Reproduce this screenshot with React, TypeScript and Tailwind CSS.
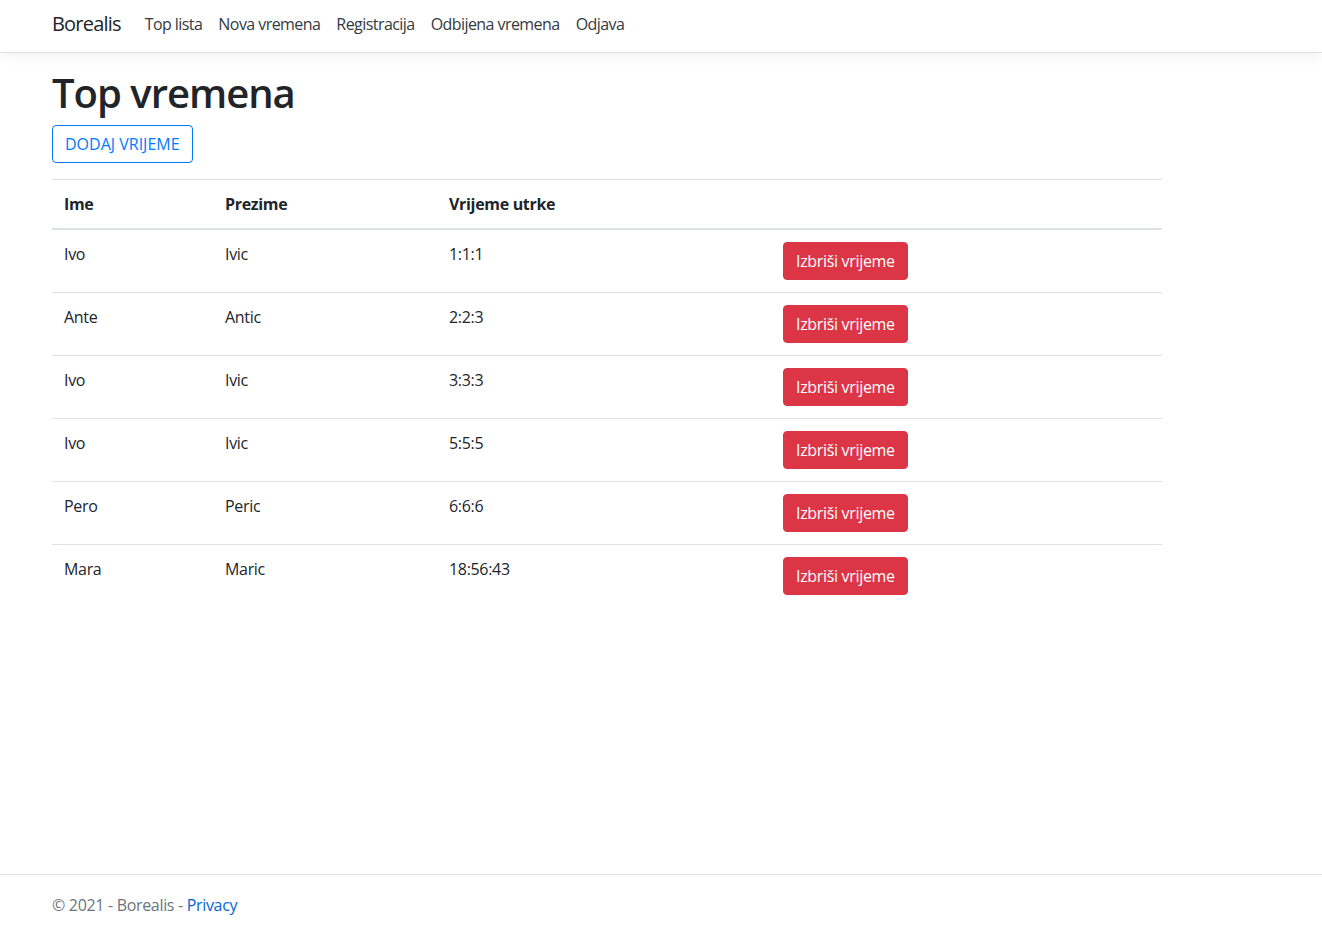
import React from "react";

type Row = { ime: string; prezime: string; vrijeme: string };

const rows: Row[] = [
  { ime: "Ivo", prezime: "Ivic", vrijeme: "1:1:1" },
  { ime: "Ante", prezime: "Antic", vrijeme: "2:2:3" },
  { ime: "Ivo", prezime: "Ivic", vrijeme: "3:3:3" },
  { ime: "Ivo", prezime: "Ivic", vrijeme: "5:5:5" },
  { ime: "Pero", prezime: "Peric", vrijeme: "6:6:6" },
  { ime: "Mara", prezime: "Maric", vrijeme: "18:56:43" },
];

const links = ["Top lista", "Nova vremena", "Registracija", "Odbijena vremena", "Odjava"];

function Navbar() {
  return (
    <header className="relative z-10 border-b border-[#dee2e6] bg-white shadow-[0_4px_12px_rgba(0,0,0,0.05)]">
      <nav className="flex h-[52px] items-center pb-[4px] pl-[52px]">
        <a className="mr-4 text-[20px] leading-[30px] tracking-[-0.04em] text-[#212529]">Borealis</a>
        <ul className="flex">
          {links.map((l) => (
            <li key={l}>
              <a className="block px-2 text-[16px] leading-6 tracking-[-0.035em] text-[#343a40]">{l}</a>
            </li>
          ))}
        </ul>
      </nav>
    </header>
  );
}

/** Results table — bootstrap-ish .table look. */
function TimesTable() {
  return (
    <table className="w-[1110px] border-collapse text-left text-[16px] leading-6 text-[#212529]">
      <thead>
        <tr className="border-t border-[#dee2e6]">
          <th className="w-[161px] border-b-2 border-[#dee2e6] p-3 font-bold">Ime</th>
          <th className="w-[224px] border-b-2 border-[#dee2e6] p-3 font-bold">Prezime</th>
          <th className="w-[334px] border-b-2 border-[#dee2e6] p-3 font-bold">Vrijeme utrke</th>
          <th className="border-b-2 border-[#dee2e6] p-3"></th>
        </tr>
      </thead>
      <tbody>
        {rows.map((r, i) => (
          <tr key={i} className="border-t border-[#dee2e6] first:border-t-0">
            <td className="p-3 align-top">{r.ime}</td>
            <td className="p-3 align-top">{r.prezime}</td>
            <td className="p-3 align-top">{r.vrijeme}</td>
            <td className="p-3 align-top">
              <button className="rounded-[4px] border border-[#dc3545] bg-[#dc3545] px-3 py-1.5 text-[16px] leading-6 text-white">
                Izbriši vrijeme
              </button>
            </td>
          </tr>
        ))}
      </tbody>
    </table>
  );
}

export default function App() {
  return (
    <div className="flex h-[926px] flex-col overflow-hidden bg-white font-['Segoe_UI','Open_Sans',sans-serif] tracking-[-0.02em] text-[#212529]">
      <Navbar />
      <main className="flex-1 pl-[52px] pt-4">
        <h1 className="mb-2 text-[40px] font-semibold leading-[48px] tracking-[-0.025em]">Top vremena</h1>
        <div className="mb-4">
          <button className="rounded-[4px] border border-[#007bff] px-3 py-1.5 text-[16px] leading-6 tracking-normal text-[#007bff]">
            DODAJ VRIJEME
          </button>
        </div>
        <TimesTable />
      </main>
      <footer className="h-[52px] border-t border-[#dee2e6] pl-[52px] text-[16px] leading-[60px] text-[#6c757d]">
        © 2021 - Borealis - <a className="text-[#0366d6]">Privacy</a>
      </footer>
    </div>
  );
}
